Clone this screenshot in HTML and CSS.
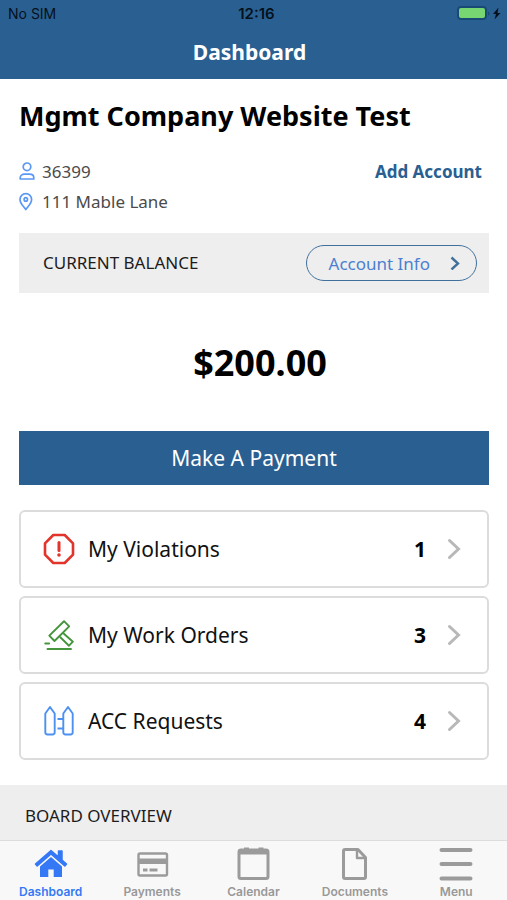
FILE: index.html
```html
<!DOCTYPE html>
<html lang="en">
<head>
<meta charset="utf-8">
<meta name="viewport" content="width=device-width, initial-scale=1">
<title>Dashboard</title>
<link rel="stylesheet" href="styles.css">
</head>
<body>
<header class="header">
  <div class="status">
    <span>No SIM</span>
    <span class="clock">12:16</span>
    <span class="power">
      <svg width="46" height="16" viewBox="0 0 46 16" aria-hidden="true">
        <rect x="1" y="1" width="28" height="12" rx="3" fill="#77d672" stroke="#184a75" stroke-width="2"/>
        <path d="M31 5.500v4q1.500-.5 1.500-2t-1.500-2z" fill="#184a75"/>
        <path d="M41.500 1.500 36 8h3l-1.500 5.500L43.500 7h-3z" fill="#04101b"/>
      </svg>
    </span>
  </div>
  <h1 class="title">Dashboard</h1>
</header>

<main class="content">
  <div class="page">
    <h2 class="company">Mgmt Company Website Test</h2>
    <div class="account">
      <div class="details">
        <div class="detail">
          <svg width="16" height="20" viewBox="0 0 16 20" fill="none" stroke="#5b97f5" stroke-width="1.700" aria-hidden="true">
            <circle cx="8" cy="4.800" r="3.800"/>
            <path d="M1.200 17v-1.300c0-2.200 2-3.500 4.300-3.500h5c2.300 0 4.300 1.300 4.300 3.500V17z" stroke-linejoin="round"/>
          </svg>
          <span>36399</span>
        </div>
        <div class="detail">
          <svg width="16" height="20" viewBox="0 0 16 20" fill="none" stroke="#5b97f5" stroke-width="1.700" aria-hidden="true">
            <path d="M6.800 17.500C4.800 14.500 1 11.500 1 7.400a5.800 5.800 0 0 1 11.600 0c0 4.100-3.800 7.100-5.800 10.100z" stroke-linejoin="round"/>
            <circle cx="6.800" cy="7.400" r="1.700"/>
          </svg>
          <span>111 Mable Lane</span>
        </div>
      </div>
      <a class="add" href="#add">Add Account</a>
    </div>

    <section class="balance">
      <h3 class="label">CURRENT BALANCE</h3>
      <button class="info" type="button">Account Info
        <svg width="10" height="14" viewBox="0 0 10 14" fill="none" stroke="#40719d" stroke-width="2.400" aria-hidden="true"><path d="m1.500 1.500 6.500 6-6.500 6"/></svg>
      </button>
    </section>
    <p class="amount">$200.00</p>
    <button class="pay" type="button">Make A Payment</button>

    <nav class="cards" aria-label="Requests">
      <a class="card" href="#violations">
        <svg width="32" height="32" viewBox="0 0 32 32" fill="none" stroke="#e3342b" stroke-width="2.600" stroke-linejoin="round" aria-hidden="true">
          <path d="M10.300 2h11.400L30 10.300v11.400L21.700 30H10.300L2 21.700V10.300z"/>
          <path d="M16 9.500v8" stroke-width="3" stroke-linecap="round"/>
          <circle cx="16" cy="22" r="1.800" fill="#e3342b" stroke="none"/>
        </svg>
        <span class="name">My Violations</span><b>1</b>
        <svg width="14" height="22" viewBox="0 0 14 22" class="chevron" aria-hidden="true"><path d="m2.500 2.500 9 8.500-9 8.500"/></svg>
      </a>
      <a class="card" href="#orders">
        <svg width="32" height="32" viewBox="0 0 32 32" fill="none" stroke="#45953c" stroke-width="1.900" stroke-linecap="round" stroke-linejoin="round" aria-hidden="true">
          <path d="M21 2.200 6.300 16.600l5.200 5.400L26.200 7.400z"/>
          <path d="m20.600 14.500 9.300 8.200-3.900 4-8.700-8.500"/>
          <path d="M2.200 24.500h4M4.500 30h23.500"/>
        </svg>
        <span class="name">My Work Orders</span><b>3</b>
        <svg width="14" height="22" viewBox="0 0 14 22" class="chevron" aria-hidden="true"><path d="m2.500 2.500 9 8.500-9 8.500"/></svg>
      </a>
      <a class="card" href="#acc">
        <svg width="32" height="32" viewBox="0 0 32 32" fill="none" stroke="#4c91f2" stroke-width="1.900" stroke-linejoin="round" aria-hidden="true">
          <path d="M7 2 2.300 8.500v18.800q0 2.200 2.200 2.200h5q2.200 0 2.200-2.200V8.500zM25 2l-4.700 6.500v18.800q0 2.200 2.200 2.200h5q2.200 0 2.200-2.200V8.500z"/>
          <path d="M14.500 14h5.500M14.500 23.500h5.500"/>
        </svg>
        <span class="name">ACC Requests</span><b>4</b>
        <svg width="14" height="22" viewBox="0 0 14 22" class="chevron" aria-hidden="true"><path d="m2.500 2.500 9 8.500-9 8.500"/></svg>
      </a>
    </nav>
  </div>
  <section class="board"><h3 class="label">BOARD OVERVIEW</h3></section>
</main>

<nav class="tabs" aria-label="Main">
  <a class="tab active" href="#dashboard" aria-current="page">
    <svg width="34" height="34" viewBox="0 0 34 34" aria-hidden="true">
      <path d="M17 3.500 1.500 17l1.700 2L17 7l13.800 12 1.700-2-4.500-4V4h-3.500v6z" fill="#3478f6" stroke="#3478f6" stroke-width="1.500" stroke-linejoin="round"/>
      <path d="M17 10 6 19.500V30h8.300v-7.500h5.400V30H28V19.500z" fill="#3478f6"/>
    </svg>
    <span>Dashboard</span>
  </a>
  <a class="tab" href="#payments">
    <svg width="34" height="34" viewBox="0 0 34 34" aria-hidden="true">
      <rect x="3.500" y="6.500" width="28.500" height="22" rx="1.500" fill="none" stroke="#9b9b9b" stroke-width="2.400"/>
      <path d="M3 11.500h28v5.500H3zM8 21.500h4.500v3H8zM14.500 21.500h8v3h-8z" fill="#9b9b9b"/>
    </svg>
    <span>Payments</span>
  </a>
  <a class="tab" href="#calendar">
    <svg width="34" height="34" viewBox="0 0 34 34" aria-hidden="true">
      <rect x="3" y="3" width="29" height="28.500" rx="2" fill="none" stroke="#9b9b9b" stroke-width="3"/>
      <path d="M2.500 2.500h30V7.500H2.500zM8 .5h5v3H8zM22.500.5h5v3h-5z" fill="#9b9b9b"/>
    </svg>
    <span>Calendar</span>
  </a>
  <a class="tab" href="#documents">
    <svg width="34" height="34" viewBox="0 0 34 34" fill="none" stroke="#9b9b9b" stroke-width="3" stroke-linejoin="round" aria-hidden="true">
      <path d="M7 2.500h13l7.500 8V30a1.500 1.500 0 0 1-1.500 1.500H7A1.500 1.500 0 0 1 5.500 30V4A1.500 1.500 0 0 1 7 2.500z"/>
      <path d="M19 3v8h8.500" stroke-width="2.400"/>
    </svg>
    <span>Documents</span>
  </a>
  <a class="tab" href="#menu">
    <svg width="34" height="34" viewBox="0 0 34 34" stroke="#9b9b9b" stroke-width="4" stroke-linecap="round" aria-hidden="true">
      <path d="M2.500 3h29M2.500 17h29M2.500 31.500h29"/>
    </svg>
    <span>Menu</span>
  </a>
</nav>
</body>
</html>
```
FILE: styles.css
```css
* { box-sizing: border-box; }
h1, h2, h3, p { margin: 0; }
a { color: inherit; text-decoration: none; }
svg { flex: none; }
button { border: 0; cursor: pointer; font: inherit; }

body {
  margin: 0;
  height: 100vh;
  display: flex;
  flex-direction: column;
  background: #fff;
  color: #000;
  font-family: "Noto Sans", sans-serif;
}

.header { flex: none; background: #2a6091; padding-bottom: 12px; }
.status {
  display: grid;
  grid-template-columns: 1fr auto 1fr;
  align-items: center;
  height: 28px;
  padding: 0 4px 0 8px;
  color: #04101b;
  font: 14px/20px Inter, sans-serif;
}
.clock { padding-left: 2px; font-size: 15px; font-weight: 600; }
.power { display: flex; justify-content: flex-end; }
.title {
  padding-top: 10px;
  padding-right: 8px;
  color: #fff;
  font-size: 21px;
  line-height: 29px;
  text-align: center;
}

.content { flex: 1; min-height: 0; overflow: hidden; }
.page { padding: 19px 18px 25px 19px; }
.company { font-size: 27px; line-height: 36px; }
.account {
  display: flex;
  justify-content: space-between;
  margin-top: 23px;
  padding-right: 7px;
  font-size: 17px;
  line-height: 30px;
}
.detail { display: flex; align-items: center; gap: 7px; color: #4b4b4b; }
.add { color: #2a6091; font-weight: 700; }

.balance {
  display: flex;
  align-items: center;
  justify-content: space-between;
  height: 60px;
  margin-top: 16px;
  padding: 0 12px 0 24px;
  background: #eee;
}
.label { color: #1c1c1c; font-size: 17px; font-weight: 400; line-height: 26px; }
.info {
  display: flex;
  align-items: center;
  gap: 20px;
  height: 36px;
  padding: 0 16px 0 22px;
  border: 1px solid #40719d;
  border-radius: 18px;
  background: transparent;
  color: #4a80d0;
  font-size: 17px;
}
.amount {
  padding: 45px 0 43px 12px;
  font-size: 36px;
  font-weight: 700;
  line-height: 50px;
  text-align: center;
}
.pay {
  display: block;
  width: 100%;
  height: 54px;
  background: #2a6091;
  color: #fff;
  font-size: 21px;
}

.cards { display: grid; gap: 8px; margin-top: 25px; }
.card {
  display: flex;
  align-items: center;
  height: 78px;
  padding: 0 26px 0 22px;
  border: 2px solid #dcdcdc;
  border-radius: 6px;
  color: #111;
  font-size: 21px;
}
.name { flex: 1; padding-left: 13px; }
.card b { color: #000; }
.chevron {
  margin-left: 21px;
  fill: none;
  stroke: #b8b8b8;
  stroke-width: 3;
  stroke-linecap: round;
}
.board { height: 80px; padding: 18px 25px; background: #eee; }

.tabs {
  flex: none;
  display: grid;
  grid-template-columns: repeat(5, 1fr);
  height: 60px;
  border-top: 1px solid #ddd;
  background: #f8f8f8;
}
.tab {
  display: flex;
  flex-direction: column;
  align-items: center;
  gap: 3px;
  padding-top: 6px;
  color: #999;
  font: 600 12px/16px Inter, sans-serif;
}
.active { color: #3478f6; }
```
